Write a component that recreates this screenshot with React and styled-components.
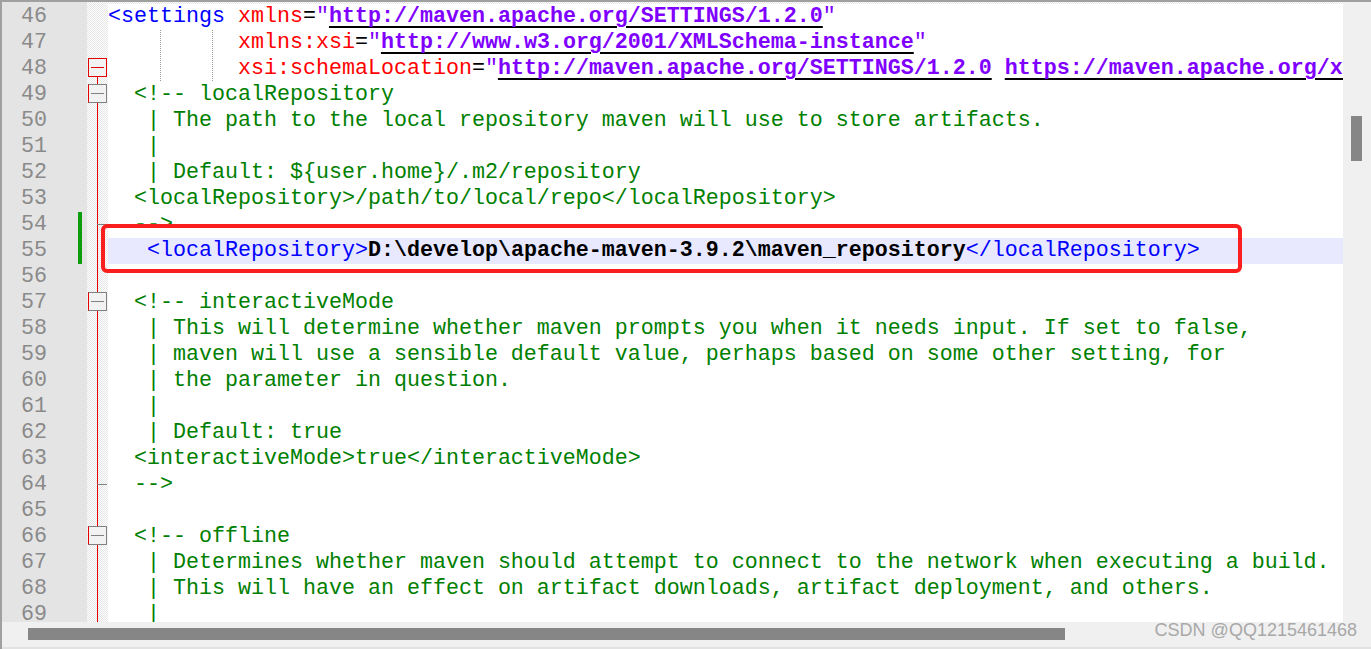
import React from 'react';
import styled, { createGlobalStyle, css } from 'styled-components';

const Global = createGlobalStyle`
  html, body {
    margin: 0;
    padding: 0;
    background: #ffffff;
  }
  * {
    box-sizing: border-box;
  }
`;

const RED = '#e30000';
const GRAY = '#808080';

const Frame = styled.div`
  position: relative;
  width: 1371px;
  height: 649px;
  border-top: 2px solid #a0a0a0;
  border-left: 2px solid #a0a0a0;
  background: #f0f0f0;
  display: grid;
  grid-template-columns: 1341px 28px;
  grid-template-rows: 620px 27px;
  overflow: hidden;
`;

const Editor = styled.div`
  display: flex;
  flex-direction: column;
  overflow: hidden;
  background: #ffffff;
  padding-top: 2px;
  background: linear-gradient(#e4e4e4, #e4e4e4) 0 0 / 85px 2px no-repeat,
    repeating-conic-gradient(#e6e6e6 0 25%, #ffffff 0 50%) 85px 0 / 2px 2px;
`;

const Row = styled.div`
  display: grid;
  grid-template-columns: 46px 39px 21px 1fr;
  height: 26px;
  flex: none;
  font-family: "Liberation Mono", "Courier New", monospace;
  font-size: 21.67px;
  line-height: 26px;
`;

const LineNo = styled.div`
  background: #e4e4e4;
  color: #8a8a8a;
  text-align: right;
  padding-right: 1px;
`;

const Marks = styled.div`
  background: #e4e4e4;
  display: flex;
  align-items: stretch;
  padding-left: 30px;
  span {
    width: 4px;
    background: ${p => (p.$changed ? '#0d9d0d' : 'transparent')};
  }
`;

const hatch = `repeating-conic-gradient(#e6e6e6 0 25%, #ffffff 0 50%) 0 0 / 2px 2px`;

const foldBg = kind => {
  const layers = [];
  if (kind === 'tick') layers.push(`linear-gradient(${GRAY}, ${GRAY}) 10px 12px / 10px 1px no-repeat`);
  if (kind === 'active') layers.push(`linear-gradient(${RED}, ${RED}) 10px 13px / 1px 13px no-repeat`);
  if (kind && kind !== 'none' && kind !== 'active') layers.push(`linear-gradient(${RED}, ${RED}) 10px 0 / 1px 26px no-repeat`);
  layers.push(hatch);
  return layers.join(', ');
};

const Fold = styled.div`
  display: flex;
  align-items: center;
  justify-content: center;
  background: ${p => foldBg(p.$kind)};
`;

const FoldBox = styled.div`
  width: 19px;
  height: 19px;
  background: #f2f2f2;
  border: 1px solid ${p => (p.$active ? RED : GRAY)};
  border-left-color: ${RED};
  display: flex;
  align-items: center;
  justify-content: center;
  margin-top: -3px;
  &::after {
    content: '';
    width: 13px;
    height: 1px;
    background: ${p => (p.$active ? RED : GRAY)};
  }
`;

const Code = styled.div`
  white-space: pre;
  overflow: hidden;
  color: #000000;
  background-color: ${p => (p.$current ? '#e8e8ff' : '#ffffff')};
  ${p =>
    p.$guides &&
    css`
      background-image: repeating-linear-gradient(#9a9a9a 0 1px, transparent 1px 2px),
        repeating-linear-gradient(#9a9a9a 0 1px, transparent 1px 2px);
      background-size: 1px 100%;
      background-position: 52px 0, 104px 0;
      background-repeat: no-repeat;
    `}
`;

const colors = {
  tag: '#0000ff',
  attr: '#ff0000',
  eq: '#000000',
  quote: '#8000ff',
  url: '#8000ff',
  comment: '#008000',
  path: '#000000',
  plain: '#000000',
};

const Token = styled.span`
  color: ${p => colors[p.$kind]};
  font-weight: ${p => (p.$kind === 'url' || p.$kind === 'path' ? 700 : 400)};
  ${p =>
    p.$kind === 'url' &&
    css`
      text-decoration: underline;
      text-decoration-color: #000000;
      text-decoration-thickness: 1.5px;
      text-underline-offset: 4px;
    `}
`;

const VScroll = styled.div`
  background: #f0f0f0;
  padding: 114px 0 0 8px;
`;

const VThumb = styled.div`
  width: 11px;
  height: 45px;
  background: #868686;
`;

const HScroll = styled.div`
  background: #f0f0f0;
  padding: 6px 0 0 26px;
  border-bottom: 2px solid #e2e2e2;
`;

const HThumb = styled.div`
  width: 1037px;
  height: 12px;
  background: #868686;
`;

const Corner = styled.div`
  background: #f0f0f0;
  border-bottom: 2px solid #e2e2e2;
`;

const Highlight = styled.div`
  position: absolute;
  left: 99px;
  top: 222px;
  width: 1141px;
  height: 49px;
  border: 4px solid #fa1e1e;
  border-radius: 6px;
  pointer-events: none;
`;

const Watermark = styled.div`
  position: absolute;
  right: 14px;
  bottom: 8px;
  font-family: "Liberation Sans", Arial, sans-serif;
  font-size: 18px;
  color: #a8a8a8;
`;

const sp = n => ['plain', ' '.repeat(n)];
const cm = text => [['comment', text]];

const lines = [
  { n: 46, t: [['tag', '<settings'], ['attr', ' xmlns'], ['eq', '='], ['quote', '"'], ['url', 'http://maven.apache.org/SETTINGS/1.2.0'], ['quote', '"']] },
  { n: 47, guides: true, t: [sp(10), ['attr', 'xmlns:xsi'], ['eq', '='], ['quote', '"'], ['url', 'http://www.w3.org/2001/XMLSchema-instance'], ['quote', '"']] },
  {
    n: 48, guides: true, fold: 'active', box: 'active',
    t: [sp(10), ['attr', 'xsi:schemaLocation'], ['eq', '='], ['quote', '"'], ['url', 'http://maven.apache.org/SETTINGS/1.2.0'], ['quote', ' '], ['url', 'https://maven.apache.org/xsd/settings-1.2.0.xsd'], ['quote', '"'], ['tag', '>']],
  },
  { n: 49, fold: 'line', box: 'open', t: cm('  <!-- localRepository') },
  { n: 50, fold: 'line', t: cm('   | The path to the local repository maven will use to store artifacts.') },
  { n: 51, fold: 'line', t: cm('   |') },
  { n: 52, fold: 'line', t: cm('   | Default: ${user.home}/.m2/repository') },
  { n: 53, fold: 'line', t: cm('  <localRepository>/path/to/local/repo</localRepository>') },
  { n: 54, fold: 'tick', changed: true, t: cm('  -->') },
  { n: 55, fold: 'line', changed: true, current: true, t: [sp(3), ['tag', '<localRepository>'], ['path', 'D:\\develop\\apache-maven-3.9.2\\maven_repository'], ['tag', '</localRepository>']] },
  { n: 56, fold: 'line', t: [] },
  { n: 57, fold: 'line', box: 'open', t: cm('  <!-- interactiveMode') },
  { n: 58, fold: 'line', t: cm('   | This will determine whether maven prompts you when it needs input. If set to false,') },
  { n: 59, fold: 'line', t: cm('   | maven will use a sensible default value, perhaps based on some other setting, for') },
  { n: 60, fold: 'line', t: cm('   | the parameter in question.') },
  { n: 61, fold: 'line', t: cm('   |') },
  { n: 62, fold: 'line', t: cm('   | Default: true') },
  { n: 63, fold: 'line', t: cm('  <interactiveMode>true</interactiveMode>') },
  { n: 64, fold: 'tick', t: cm('  -->') },
  { n: 65, fold: 'line', t: [] },
  { n: 66, fold: 'line', box: 'open', t: cm('  <!-- offline') },
  { n: 67, fold: 'line', t: cm('   | Determines whether maven should attempt to connect to the network when executing a build.') },
  { n: 68, fold: 'line', t: cm('   | This will have an effect on artifact downloads, artifact deployment, and others.') },
  { n: 69, fold: 'line', t: cm('   |') },
];

function Line({ line }) {
  return (
    <Row>
      <LineNo>{line.n}</LineNo>
      <Marks $changed={line.changed}>
        <span />
      </Marks>
      <Fold $kind={line.fold || 'none'}>
        {line.box && <FoldBox $active={line.box === 'active'} />}
      </Fold>
      <Code $current={line.current} $guides={line.guides}>
        {line.t.map(([kind, text], i) => (
          <Token key={i} $kind={kind}>
            {text}
          </Token>
        ))}
      </Code>
    </Row>
  );
}

export default function App() {
  return (
    <>
      <Global />
      <Frame>
        <Editor>
          {lines.map(line => (
            <Line key={line.n} line={line} />
          ))}
        </Editor>
        <VScroll>
          <VThumb />
        </VScroll>
        <HScroll>
          <HThumb />
        </HScroll>
        <Corner />
        <Highlight />
        <Watermark>CSDN @QQ1215461468</Watermark>
      </Frame>
    </>
  );
}
